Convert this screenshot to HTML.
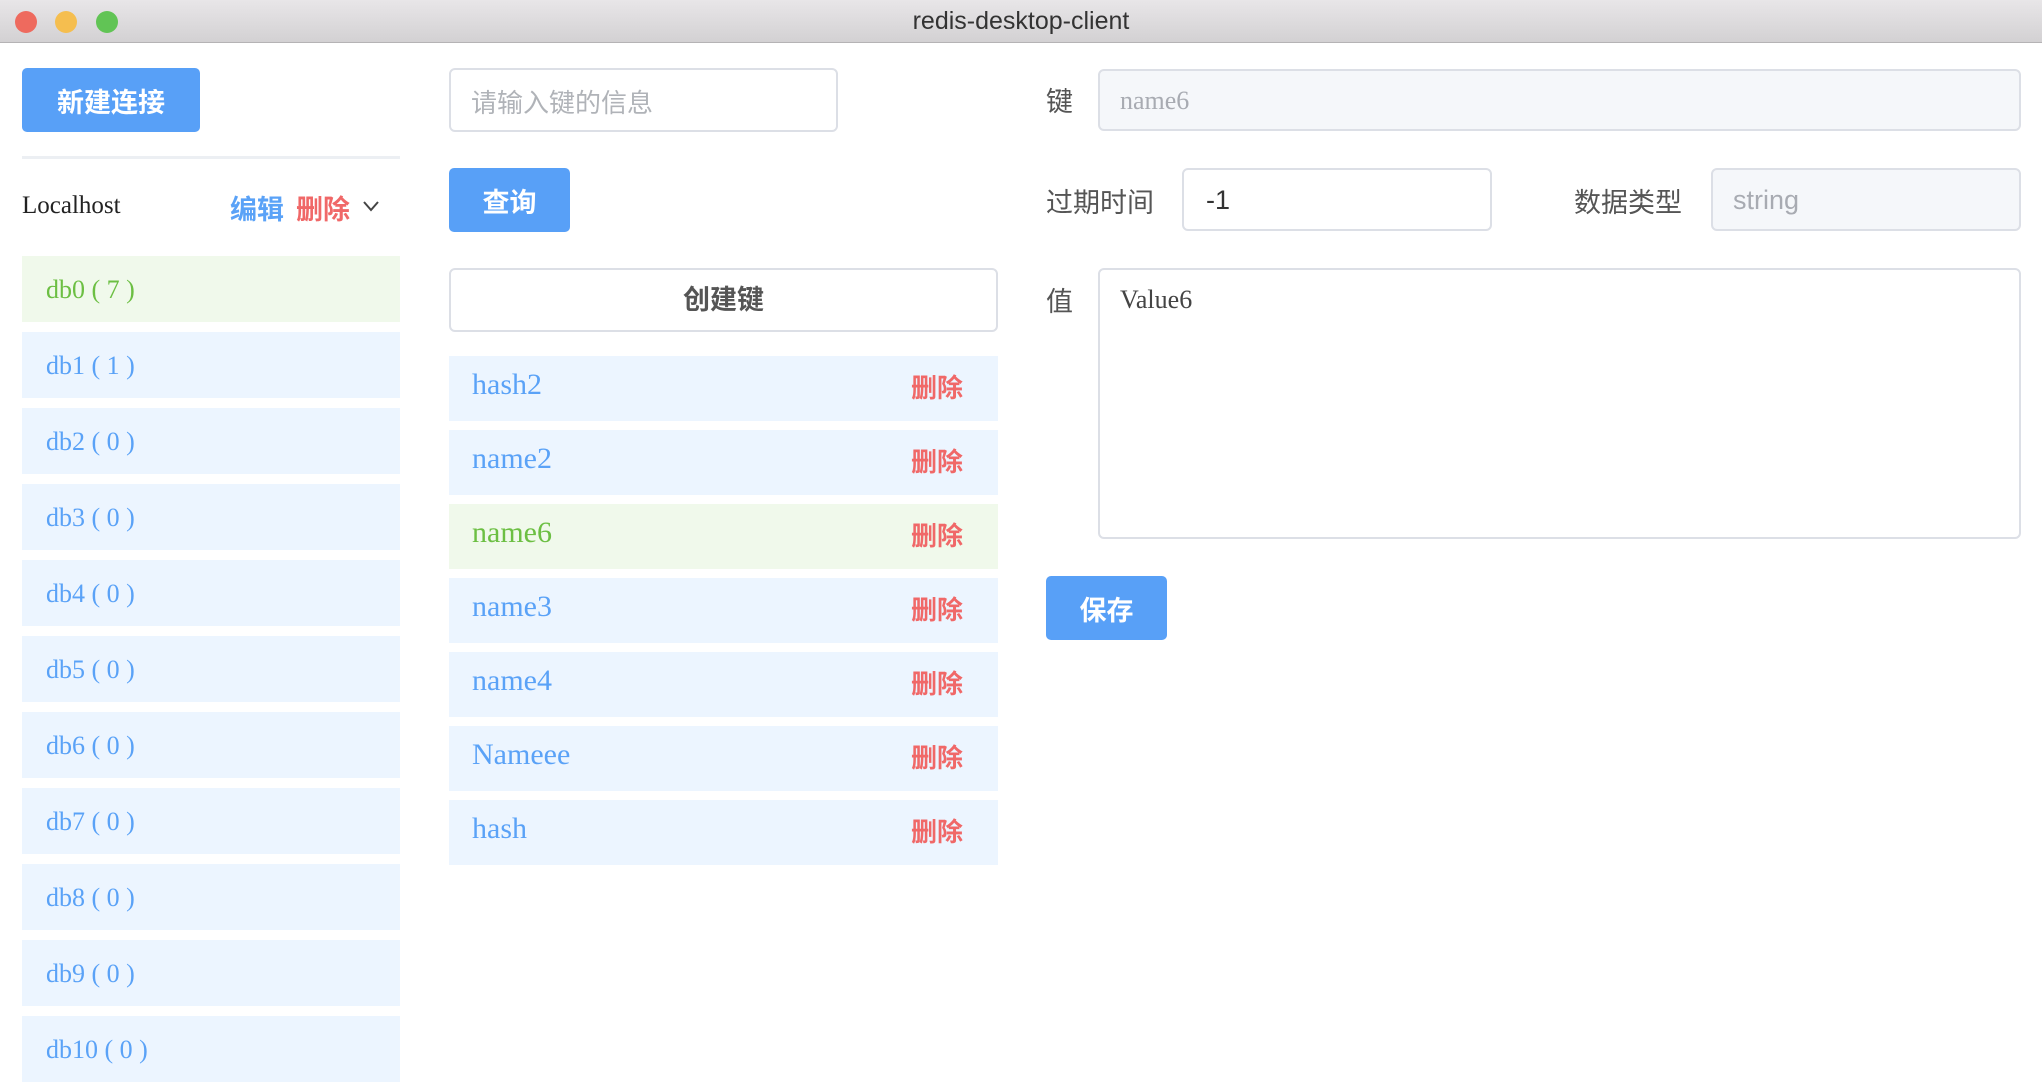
<!DOCTYPE html>
<html><head><meta charset="utf-8"><style>
*{margin:0;padding:0;box-sizing:border-box}
body{width:2042px;height:1082px;overflow:hidden;background:#fff;position:relative;font-family:"Liberation Sans","Noto Sans CJK SC",sans-serif}
.a{position:absolute}
.tb{left:0;top:0;width:2042px;height:43px;background:linear-gradient(#e8e6e8,#d3d1d3);border-bottom:1px solid #b5b3b5}
.tl{width:22px;height:22px;border-radius:50%;top:11px}
.title{left:0;width:2042px;top:7px;text-align:center;font-size:25px;color:#333}
.btn{background:#58a0f7;color:#fff;font-weight:bold;font-size:27px;border-radius:5px;display:flex;align-items:center;justify-content:center}
.db{left:22px;width:378px;height:66px;background:#ecf5ff;color:#5aa2f7;font-family:"Liberation Serif",serif;font-size:26px;padding-left:24px;line-height:68px}
.key{left:449px;width:549px;height:65px;background:#ecf5ff;color:#5aa2f7;font-family:"Liberation Serif",serif;font-size:30px;padding-left:23px;line-height:58px}
.key span{position:absolute;left:462px;top:3px;color:#f06868;font-weight:bold;font-size:26px;font-family:"Liberation Sans","Noto Sans CJK SC",sans-serif}
.inp{border:2px solid #dcdfe6;border-radius:6px;background:#fff}
.lbl{font-size:27px;color:#555}
</style></head><body>
<div class="a tb"></div>
<div class="a tl" style="left:15px;background:#ee6a5e"></div>
<div class="a tl" style="left:55px;background:#f5be4f"></div>
<div class="a tl" style="left:96px;background:#61c455"></div>
<div class="a title">redis-desktop-client</div>

<div class="a btn" style="left:22px;top:68px;width:178px;height:64px">新建连接</div>
<div class="a" style="left:22px;top:156px;width:378px;height:3px;background:#eceff3"></div>
<div class="a" style="left:22px;top:192px;font-family:'Liberation Serif',serif;font-size:25px;color:#222">Localhost</div>
<div class="a" style="left:230px;top:188px;font-size:27px;font-weight:bold;color:#5aa2f7">编辑</div>
<div class="a" style="left:296px;top:188px;font-size:27px;font-weight:bold;color:#f06868">删除</div>
<svg class="a" style="left:362px;top:199px" width="18" height="14"><path d="M2 3 L9 11 L16 3" stroke="#444" stroke-width="2" fill="none"/></svg>

<div class="a db" style="top:256px;background:#f0f9eb;color:#6cbf43">db0 ( 7 )</div>
<div class="a db" style="top:332px">db1 ( 1 )</div>
<div class="a db" style="top:408px">db2 ( 0 )</div>
<div class="a db" style="top:484px">db3 ( 0 )</div>
<div class="a db" style="top:560px">db4 ( 0 )</div>
<div class="a db" style="top:636px">db5 ( 0 )</div>
<div class="a db" style="top:712px">db6 ( 0 )</div>
<div class="a db" style="top:788px">db7 ( 0 )</div>
<div class="a db" style="top:864px">db8 ( 0 )</div>
<div class="a db" style="top:940px">db9 ( 0 )</div>
<div class="a db" style="top:1016px">db10 ( 0 )</div>

<div class="a inp" style="left:449px;top:68px;width:389px;height:64px;font-size:26px;color:#b0b3b8;padding:13px 0 0 20px">请输入键的信息</div>
<div class="a btn" style="left:449px;top:168px;width:121px;height:64px">查询</div>
<div class="a inp" style="left:449px;top:268px;width:549px;height:64px;font-size:27px;font-weight:bold;color:#555;text-align:center;line-height:60px">创建键</div>

<div class="a key" style="top:356px">hash2<span>删除</span></div>
<div class="a key" style="top:430px">name2<span>删除</span></div>
<div class="a key" style="top:504px;background:#f0f9eb;color:#6cbf43">name6<span>删除</span></div>
<div class="a key" style="top:578px">name3<span>删除</span></div>
<div class="a key" style="top:652px">name4<span>删除</span></div>
<div class="a key" style="top:726px">Nameee<span>删除</span></div>
<div class="a key" style="top:800px">hash<span>删除</span></div>

<div class="a lbl" style="left:1046px;top:80px">键</div>
<div class="a inp" style="left:1098px;top:69px;width:923px;height:62px;background:#f5f7fa;font-family:'Liberation Serif',serif;font-size:26px;color:#a8abb2;padding:15px 0 0 20px">name6</div>
<div class="a lbl" style="left:1046px;top:181px">过期时间</div>
<div class="a inp" style="left:1182px;top:168px;width:310px;height:63px;font-size:27px;color:#333;padding:15px 0 0 22px">-1</div>
<div class="a lbl" style="left:1574px;top:181px">数据类型</div>
<div class="a inp" style="left:1711px;top:168px;width:310px;height:63px;background:#f5f7fa;font-size:27px;color:#a8abb2;padding:15px 0 0 20px">string</div>
<div class="a lbl" style="left:1046px;top:280px">值</div>
<div class="a inp" style="left:1098px;top:268px;width:923px;height:271px;font-family:'Liberation Serif',serif;font-size:26px;color:#444;padding:15px 0 0 20px">Value6</div>
<div class="a btn" style="left:1046px;top:576px;width:121px;height:64px">保存</div>
</body></html>
